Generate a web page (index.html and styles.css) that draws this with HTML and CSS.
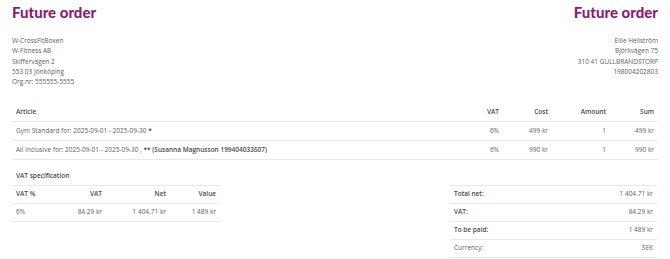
FILE: index.html
```html
<!DOCTYPE html>
<html>
<head>
<meta charset="utf-8">
<link rel="stylesheet" href="styles.css">
</head>
<body>
<div class="page">
  <header class="top">
    <h1 class="title">Future order</h1>
    <h1 class="title">Future order</h1>
  </header>
  <section class="addresses">
    <div class="addr">
      <div>W-CrossFitBoxen</div>
      <div>W-Fitness AB</div>
      <div>Skiffervägen 2</div>
      <div>553 03 Jönköping</div>
      <div>Org.nr: 555555-5555</div>
    </div>
    <div class="addr right">
      <div>Ellie Hellström</div>
      <div>Björkvägen 75</div>
      <div>310 41 GULLBRANDSTORP</div>
      <div>198004202803</div>
    </div>
  </section>
  <table class="articles">
    <colgroup>
      <col>
      <col class="c-vat">
      <col class="c-cost">
      <col class="c-amount">
      <col class="c-sum">
    </colgroup>
    <thead>
      <tr><th class="l">Article</th><th>VAT</th><th>Cost</th><th>Amount</th><th>Sum</th></tr>
    </thead>
    <tbody>
      <tr><td class="l">Gym Standard for: 2025-09-01 - 2025-09-30 <b>*</b></td><td>6%</td><td>499 kr</td><td>1</td><td>499 kr</td></tr>
      <tr><td class="l">All Inclusive for: 2025-09-01 - 2025-09-30 , <b>** (Susanna Magnusson 199404033507)</b></td><td>6%</td><td>990 kr</td><td>1</td><td>990 kr</td></tr>
    </tbody>
  </table>
  <section class="bottom">
    <table class="vatspec">
      <colgroup>
        <col class="v1"><col class="v2"><col class="v3"><col class="v4">
      </colgroup>
      <thead>
        <tr><th class="l caption" colspan="4">VAT specification</th></tr>
        <tr><th class="l">VAT %</th><th>VAT</th><th>Net</th><th>Value</th></tr>
      </thead>
      <tbody>
        <tr><td class="l">6%</td><td>84.29 kr</td><td>1 404.71 kr</td><td>1 489 kr</td></tr>
      </tbody>
    </table>
    <table class="totals">
      <tbody>
        <tr><th class="l">Total net:</th><td>1 404.71 kr</td></tr>
        <tr><th class="l">VAT:</th><td>84.29 kr</td></tr>
        <tr><th class="l">To be paid:</th><td>1 489 kr</td></tr>
        <tr><td class="l">Currency:</td><td>SEK</td></tr>
      </tbody>
    </table>
  </section>
</div>
</body>
</html>
```
FILE: styles.css
```css
* { box-sizing: border-box; }
html, body { margin: 0; padding: 0; background: #fff; }
body {
  font-family: "Open Sans", "Liberation Sans", sans-serif;
  font-size: 6.5px;
  color: #606060;
}
.page { padding: 3px 12px 0 12px; }
.top { display: flex; justify-content: space-between; }
.title {
  margin: 0;
  font-family: Lato, "Open Sans", sans-serif;
  font-weight: 900;
  font-size: 15px;
  line-height: 18px;
  color: #8c1d72;
}
.addresses {
  display: flex;
  justify-content: space-between;
  margin-top: 15px;
  line-height: 10.35px;
}
.addr.right { text-align: right; }
table { border-collapse: collapse; table-layout: fixed; }
th, td {
  text-align: right;
  font-weight: 400;
  line-height: 8px;
  padding: 5px 4px;
  border-bottom: 1px solid #e8e8e8;
  white-space: nowrap;
}
th { font-weight: 600; color: #4a4a4a; }
b { font-weight: 600; color: #4a4a4a; }
.l { text-align: left; }
.articles { width: 100%; margin-top: 15px; }
.c-vat { width: 48px; }
.c-cost { width: 49px; }
.c-amount { width: 58px; }
.c-sum { width: 48px; }
.bottom {
  display: flex;
  justify-content: space-between;
  align-items: flex-start;
  margin-top: 8px;
}
.vatspec { width: 208px; }
.totals { width: 207px; margin-right: 1px; }
.vatspec th, .vatspec td, .totals th, .totals td { padding: 4.5px 4px; }
.v1 { width: 40px; }
.v2 { width: 54px; }
.v3 { width: 64px; }
.v4 { width: 50px; }
.totals { margin-top: 17px; border-top: 1px solid #e8e8e8; }
```
